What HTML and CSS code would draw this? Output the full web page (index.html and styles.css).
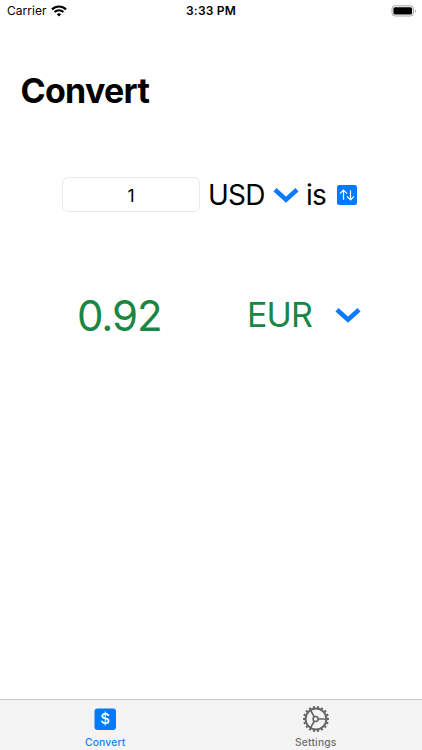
FILE: index.html
```html
<!DOCTYPE html>
<html lang="en">
<head>
  <meta charset="UTF-8" />
  <meta name="viewport" content="width=device-width, initial-scale=1.0"/>
  <title>Convert</title>
  <link rel="stylesheet" href="styles.css">
</head>
<body>
  <div class="status-bar">
    <div class="carrier">
      <span>Carrier</span>
      <svg class="wifi" width="16" height="12" viewBox="0 0 16 12" fill="none" stroke="#000" stroke-width="2.2">
        <path d="M1 4.4a9.9 9.9 0 0 1 14 0"/>
        <path d="M3.6 7.1a6.2 6.2 0 0 1 8.8 0"/>
        <path d="M8 11.6L5.8 9.3a3.1 3.1 0 0 1 4.4 0z" fill="#000" stroke="none"/>
      </svg>
    </div>
    <div class="time">3:33 PM</div>
    <div class="battery">
      <svg width="26" height="12" viewBox="0 0 26 12">
        <rect x="1" y=".8" width="21.5" height="10.2" rx="3" fill="#fff" stroke="#a6a6a6"/>
        <rect x="2.4" y="2.2" width="18.7" height="7.4" rx="1.6" fill="#000"/>
        <path d="M24 4.2c1.3.6 1.3 3 0 3.6z" fill="#a6a6a6"/>
      </svg>
    </div>
  </div>

  <main>
    <h1>Convert</h1>

    <div class="from-row">
      <input class="amount" type="text" value="1">
      <span class="from-currency">USD</span>
      <svg class="chevron from-chevron" width="26" height="16" viewBox="0 0 26 16">
        <path d="M2 2.8l11 9.9 11-9.9"/>
      </svg>
      <span class="is">is</span>
      <svg class="swap" width="20" height="20" viewBox="0 0 20 20">
        <rect width="20" height="20" rx="2.5" fill="#007aff"/>
        <path d="M6.5 14.8V5.4M3 8.7l3.5-3.5L10 8.7M13.5 5.2v9.4M10 11.3l3.5 3.5 3.5-3.5" fill="none" stroke="#fff" stroke-width="1.2"/>
      </svg>
    </div>

    <div class="to-row">
      <span class="result">0.92</span>
      <span class="to-currency">EUR</span>
      <svg class="chevron" width="26" height="16" viewBox="0 0 26 16">
        <path d="M2 2.8l11 9.9 11-9.9"/>
      </svg>
    </div>
  </main>

  <nav class="tab-bar">
    <a class="tab active">
      <svg width="28" height="28" viewBox="0 0 28 28">
        <rect x="3.5" y="3.5" width="21.5" height="21.5" rx="3" fill="#007aff"/>
        <text class="dollar" x="14.2" y="19.3" text-anchor="middle">$</text>
      </svg>
      <span>Convert</span>
    </a>
    <a class="tab">
      <svg width="28" height="28" viewBox="0 0 28 28" fill="none" stroke="#666">
        <circle cx="14" cy="14" r="12" stroke-width="2" pathLength="36" stroke-dasharray="1 1" stroke-dashoffset=".5"/>
        <circle cx="14" cy="14" r="10.4" stroke-width="2"/>
        <circle cx="13.6" cy="14" r="2.5" stroke-width="1.6"/>
        <path d="M16 14h8M12.4 12L8.6 5.4M12.4 16l-3.8 6.6" stroke-width="1.7"/>
      </svg>
      <span>Settings</span>
    </a>
  </nav>
</body>
</html>
```

FILE: styles.css
```css
* {
  box-sizing: border-box;
}
body {
  margin: 0;
  height: 750px;
  display: flex;
  flex-direction: column;
  background: #fff;
  color: #000;
  font-family: Inter, "Liberation Sans", sans-serif;
  overflow: hidden;
}
svg {
  display: block;
  flex: none;
}

.status-bar {
  display: grid;
  grid-template-columns: 1fr auto 1fr;
  align-items: center;
  height: 22px;
  padding: 0 5px 0 7px;
  font-size: 12px;
  line-height: 22px;
}
.carrier {
  display: flex;
  align-items: center;
  gap: 4px;
  letter-spacing: 0.05px;
}
.time {
  padding-right: 2px;
  font-weight: 600;
  letter-spacing: 0.2px;
}
.battery {
  display: flex;
  justify-content: flex-end;
}

main {
  flex: 1;
}
h1 {
  margin: 47px 0 0 20.5px;
  font-size: 34px;
  font-weight: 700;
  line-height: 44px;
  letter-spacing: -0.7px;
}
.from-row {
  display: flex;
  align-items: center;
  height: 36px;
  margin: 64px 0 0 62px;
  font-size: 28px;
  line-height: 36px;
}
.amount {
  width: 138px;
  height: 35px;
  margin-bottom: 1px;
  padding: 2px 0 0;
  border: 1px solid #e8e8e8;
  border-radius: 6px;
  background: #fff;
  color: #000;
  font-family: inherit;
  font-size: 17.5px;
  text-align: center;
}
.from-currency {
  width: 56px;
  margin-left: 8px;
  letter-spacing: -0.8px;
}
.chevron {
  fill: none;
  stroke: #0a7aff;
  stroke-width: 4.6;
}
.from-chevron {
  margin-left: 9px;
}
.is {
  width: 22px;
  margin-left: 7px;
  letter-spacing: -0.8px;
}
.swap {
  margin-left: 9px;
}

.to-row {
  display: flex;
  align-items: center;
  height: 50px;
  margin: 77px 0 0 77px;
  color: #1a8644;
}
.result {
  width: 170px;
  font-size: 42px;
  letter-spacing: -1.1px;
}
.to-currency {
  width: 88px;
  padding-bottom: 2px;
  font-size: 34px;
  letter-spacing: -0.9px;
}

.tab-bar {
  display: flex;
  height: 51px;
  padding-right: 1px;
  border-top: 1px solid #c8c8c8;
  background: #f4f4f4;
}
.tab {
  flex: 1;
  display: flex;
  flex-direction: column;
  align-items: center;
  padding-top: 5px;
  color: #707070;
  font-size: 10.3px;
  font-weight: 500;
  line-height: 19px;
  letter-spacing: 0.2px;
}
.active {
  color: #1580f8;
}
.dollar {
  fill: #fff;
  font-size: 15px;
  font-weight: 500;
}
```
